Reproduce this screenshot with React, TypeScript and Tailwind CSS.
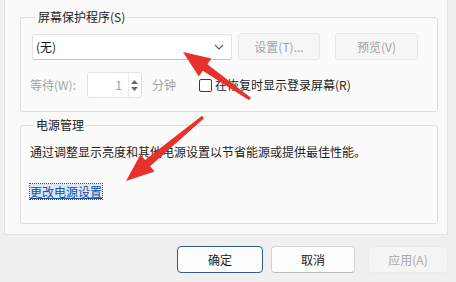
type P = [number, number]

const arrowPoints = (tail: P, tip: P, headLen: number, headW: number, w1: number, w2: number) => {
  const dx = tip[0] - tail[0]
  const dy = tip[1] - tail[1]
  const len = Math.hypot(dx, dy)
  const ux = dx / len
  const uy = dy / len
  const px = -uy
  const py = ux
  const bx = tip[0] - ux * headLen
  const by = tip[1] - uy * headLen
  const pts: P[] = [
    [tail[0] + (px * w1) / 2, tail[1] + (py * w1) / 2],
    [bx + (px * w2) / 2, by + (py * w2) / 2],
    [bx + (px * headW) / 2, by + (py * headW) / 2],
    tip,
    [bx - (px * headW) / 2, by - (py * headW) / 2],
    [bx - (px * w2) / 2, by - (py * w2) / 2],
    [tail[0] - (px * w1) / 2, tail[1] - (py * w1) / 2],
  ]
  return pts.map((p) => `${p[0].toFixed(1)},${p[1].toFixed(1)}`).join(' ')
}

const Chevron = () => (
  <svg width="10" height="6" viewBox="0 0 10 6" fill="none">
    <path d="M1 1l4 4 4-4" stroke="#5a5a5a" strokeWidth="1.1" />
  </svg>
)

const App = () => {
  return (
    <div className="relative w-[456px] h-[282px] bg-[#f0f0f0] overflow-hidden font-['Noto_Sans_CJK_SC','Microsoft_YaHei',sans-serif] text-[12px] leading-[14px] text-[#1b1b1b]">
      <div className="ml-[4px] w-[444px] h-[235px] bg-[#f9f9f9] border-l border-r border-b border-[#e2e2e2] pt-[10px] pl-[15px]">
        <fieldset className="w-[418px] h-[102px] border border-[#dddddd] rounded-[3px] bg-[#fbfbfb] pl-[11px] pt-[9px]">
          <legend className="ml-[4px] px-[2px] leading-[14px]">屏幕保护程序(S)</legend>
          <div className="flex items-center">
            <div className="w-[200px] h-[26px] flex items-center justify-between bg-white border border-[#e3e3e3] border-b-[#c4c4c4] rounded-[3px] pl-[3px] pr-[7px]">
              <span>(无)</span>
              <Chevron />
            </div>
            <button className="ml-[6px] w-[82px] h-[27px] bg-[#f6f6f6] border border-[#e8e8e8] rounded-[3px] text-[#a3a3a3]">
              设置(T)...
            </button>
            <button className="ml-[15px] w-[83px] h-[27px] bg-[#f6f6f6] border border-[#e8e8e8] rounded-[3px] text-[#a3a3a3]">
              预览(V)
            </button>
          </div>
          <div className="flex items-center mt-[12px] -ml-[2px] h-[26px]">
            <span className="text-[#a3a3a3]">等待(W):</span>
            <div className="ml-[11px] w-[55px] h-[26px] flex bg-white border border-[#e3e3e3] rounded-[3px]">
              <span className="flex-1 flex items-center justify-end pr-[6px] text-[#9a9a9a]">1</span>
              <div className="w-[13px] flex flex-col items-center justify-center gap-[3px] border-l border-[#ececec]">
                <svg width="7" height="4" viewBox="0 0 7 4"><path d="M0 4L3.5 0 7 4z" fill="#6a6a6a" /></svg>
                <svg width="7" height="4" viewBox="0 0 7 4"><path d="M0 0L3.5 4 7 0z" fill="#6a6a6a" /></svg>
              </div>
            </div>
            <span className="ml-[10px] text-[#a3a3a3]">分钟</span>
            <span className="ml-[23px] w-[13px] h-[13px] bg-white border border-[#3a3a3a] rounded-[2px]" />
            <span className="ml-[3px]">在恢复时显示登录屏幕(R)</span>
          </div>
        </fieldset>

        <fieldset className="mt-[6px] w-[418px] h-[106px] border border-[#dddddd] rounded-[3px] bg-[#fbfbfb] pl-[9px] pt-[12px]">
          <legend className="ml-[4px] px-[2px] leading-[14px]">电源管理</legend>
          <p className="leading-[16px]">通过调整显示亮度和其他电源设置以节省能源或提供最佳性能。</p>
          <a className="inline-block mt-[24px] leading-[15px] text-[#1a4f9c] underline bg-[#d9e7f7] outline-1 outline-dotted outline-[#4a4a4a]">
            更改电源设置
          </a>
        </fieldset>
      </div>

      <div className="flex justify-end gap-[8px] mt-[11px] pr-[8px]">
        <button className="w-[86px] h-[27px] bg-[#fdfdfd] border border-[#2f5f92] rounded-[4px]">确定</button>
        <button className="w-[84px] h-[27px] bg-[#fdfdfd] border border-[#d4d4d4] border-b-[#bcbcbc] rounded-[4px]">取消</button>
        <button className="ml-[5px] w-[80px] h-[27px] bg-[#f5f5f5] border border-[#ececec] rounded-[4px] text-[#a8a8a8]">应用(A)</button>
      </div>

      <svg className="absolute inset-0 pointer-events-none" width="456" height="282">
        <polygon points={arrowPoints([250, 99], [183, 52], 27, 22, 3, 8)} fill="#e8312c" />
        <polygon points={arrowPoints([203, 117], [126, 181], 28, 22, 3, 8)} fill="#e8312c" />
      </svg>
    </div>
  )
}

export default App
